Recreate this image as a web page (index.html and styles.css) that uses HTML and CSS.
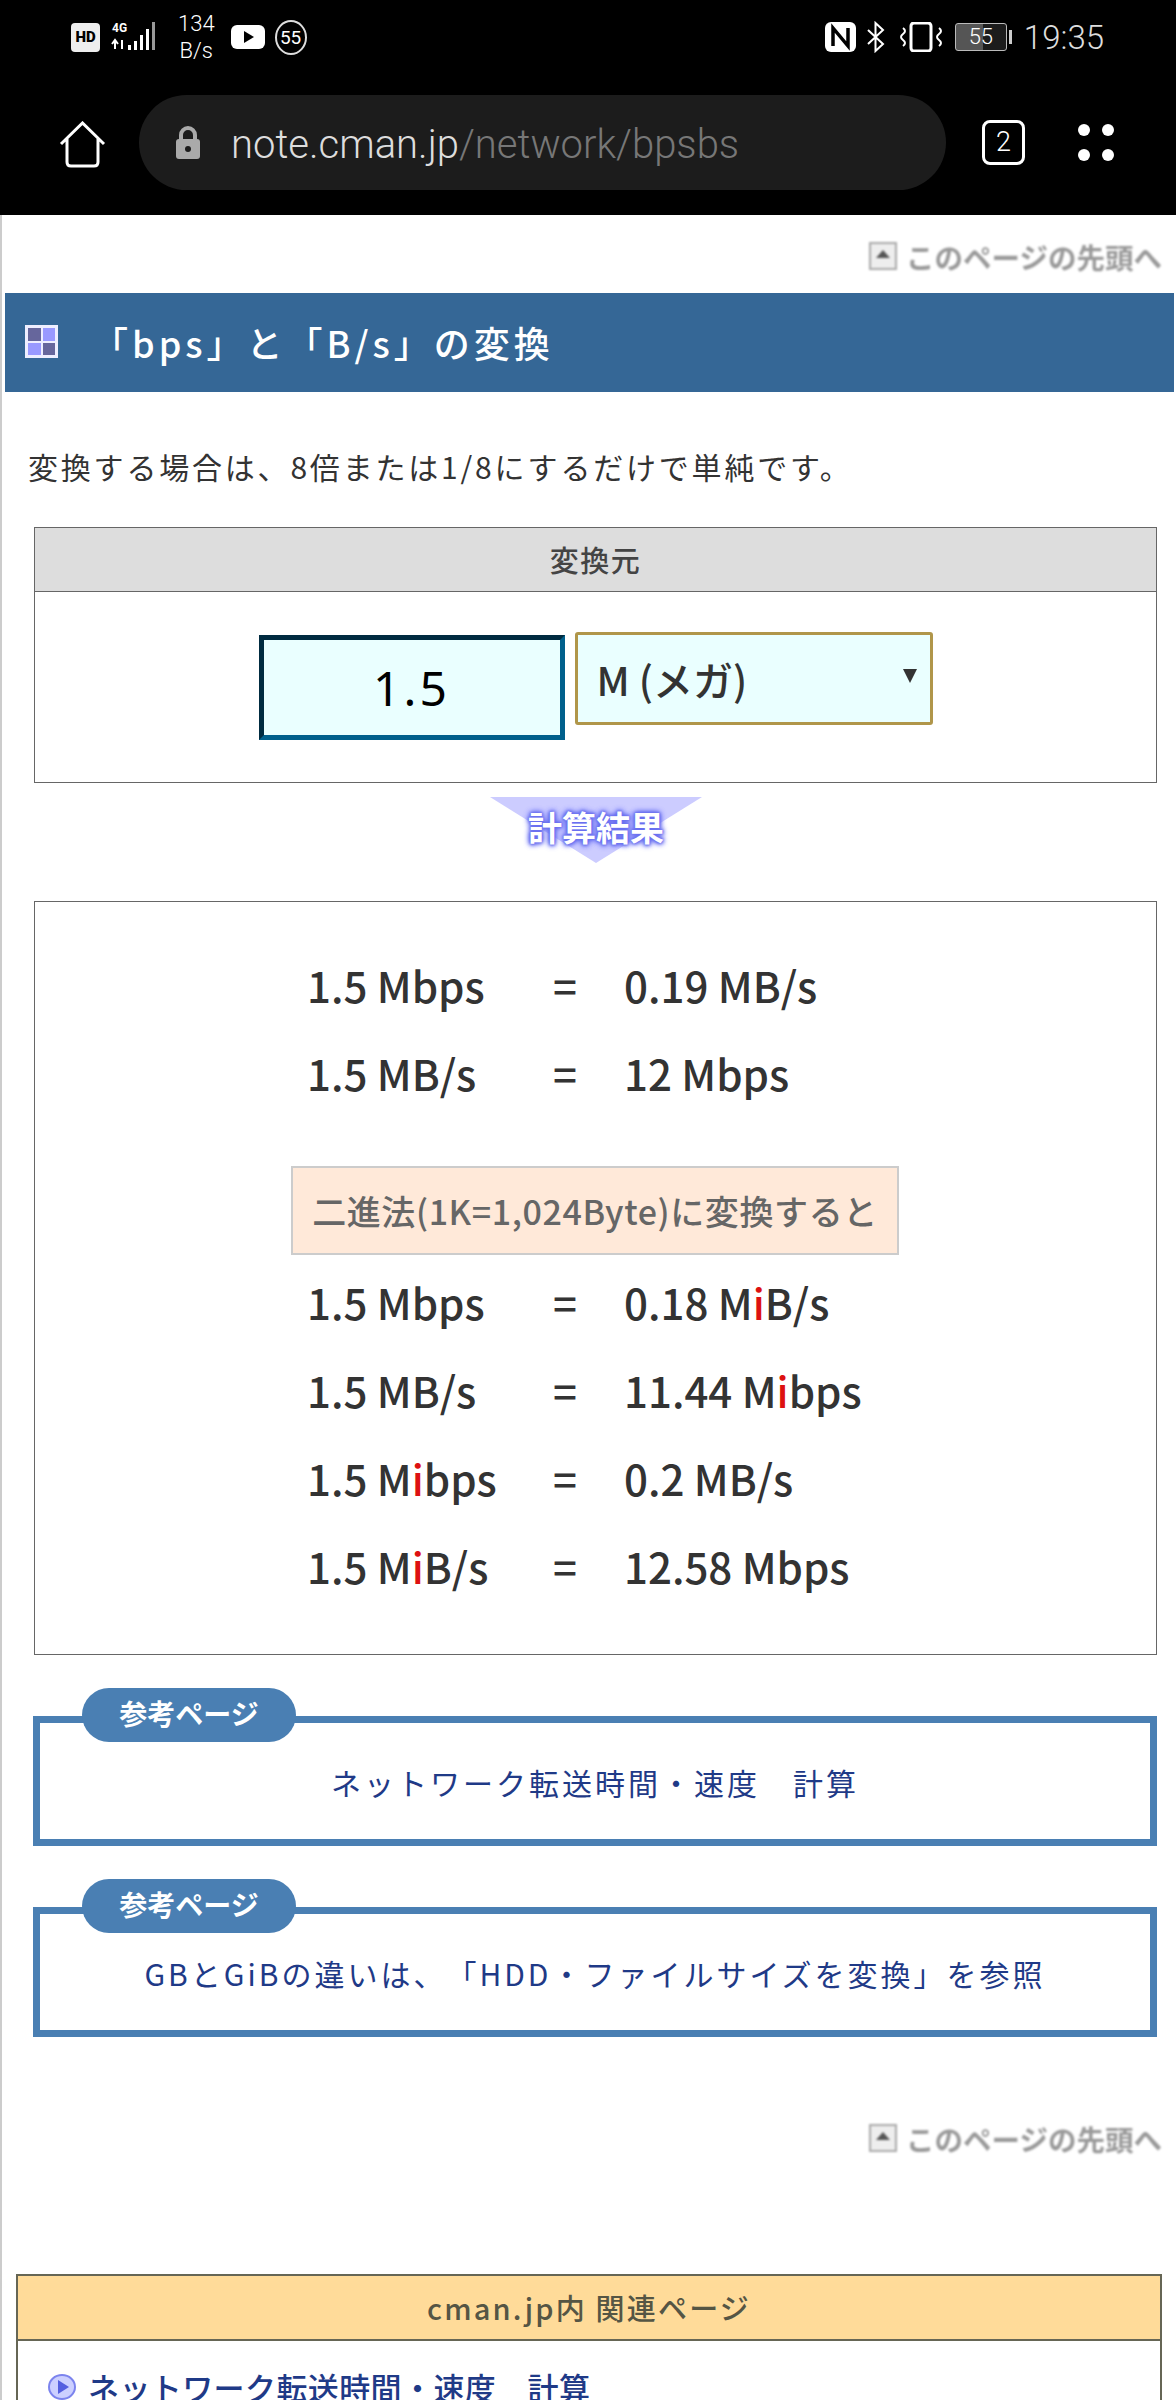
FILE: index.html
```html
<!DOCTYPE html>
<html lang="ja">
    <head>
        <meta charset="UTF-8" />
        <title>bpsとB/sの変換</title>
        <link rel="stylesheet" href="styles.css">
    </head>
    <body>
        <div class="phone-top">
            <div class="status-bar">
                <div class="status-left">
                    <span class="hd">HD</span>
                    <svg class="signal" width="50" height="32" viewBox="0 0 50 32">
                        <text x="1" y="11" class="sig-text">4G</text>
                        <path d="M4 19v9M1 23l3-4 3 4M11 19v9" stroke="#fff" stroke-width="2" fill="none"/>
                        <rect x="17" y="24" width="3" height="5" fill="#fff"/>
                        <rect x="23" y="20" width="3" height="9" fill="#fff"/>
                        <rect x="29" y="14" width="3" height="15" fill="#fff"/>
                        <rect x="35" y="8" width="3" height="21" fill="#fff"/>
                        <rect x="41" y="1" width="3" height="28" fill="#999"/>
                    </svg>
                    <span class="speed">134<br />B/s</span>
                    <svg class="play" width="34" height="24" viewBox="0 0 34 24">
                        <rect width="34" height="24" rx="6" fill="#fff"/>
                        <path d="M13 6l10 6-10 6z" fill="#000"/>
                    </svg>
                    <span class="count">55</span>
                </div>
                <div class="status-right">
                    <svg width="31" height="30" viewBox="0 0 31 30">
                        <rect x="0" y="0" width="31" height="30" rx="6" fill="#fff"/>
                        <path d="M8 24V6l15 18V6" stroke="#000" stroke-width="3.5" fill="none"/>
                    </svg>
                    <svg class="bt" width="19" height="32" viewBox="0 0 19 32">
                        <path d="M2 9l15 14-7.500 7V2L17 9 2 23" stroke="#fff" stroke-width="2" fill="none"/>
                    </svg>
                    <svg class="vibrate" width="43" height="30" viewBox="0 0 43 30">
                        <rect x="11" y="1" width="20" height="28" rx="3" stroke="#fff" stroke-width="3" fill="none"/>
                        <path d="M3 6q4 3 0 6t0 6 0 6M39 6q4 3 0 6t0 6 0 6" stroke="#fff" stroke-width="2" fill="none"/>
                    </svg>
                    <span class="battery"><span class="battery-num">55</span></span>
                    <span class="clock">19:35</span>
                </div>
            </div>
            <div class="url-row">
                <svg class="home" width="49" height="47" viewBox="0 0 49 47">
                    <path d="M3 23L24.500 2 46 23M9 18v23q0 4 4 4h23q4 0 4-4V18" stroke="#fff" stroke-width="3" fill="none"/>
                </svg>
                <div class="url-bar">
                    <svg width="28" height="33" viewBox="0 0 28 33">
                        <rect x="2" y="13" width="24" height="20" rx="3" fill="#aaa"/>
                        <path d="M7 14V9a7 7 0 0 1 14 0v5" stroke="#aaa" stroke-width="4" fill="none"/>
                        <circle cx="14" cy="23" r="3" fill="#1c1c1c"/>
                    </svg>
                    <span class="url"><span class="host">note.cman.jp</span>/network/bpsbs</span>
                </div>
                <span class="tab-count">2</span>
                <div class="menu-dots"><i></i><i></i><i></i><i></i></div>
            </div>
        </div>

        <div class="page">
            <div class="to-top to-top-first"><span class="top-icon"></span>このページの先頭へ</div>

            <h2 class="title-bar">
                <span class="title-icon"><i></i><i class="light"></i><i class="light"></i><i></i></span>
                <span>「bps」と「B/s」の変換</span>
            </h2>

            <p class="lead">変換する場合は、8倍または1/8にするだけで単純です。</p>

            <div class="box source-box">
                <div class="box-head">変換元</div>
                <div class="source-form">
                    <input class="num-input" type="text" value="1.5" />
                    <div class="unit-select">M (メガ)<span class="arrow"></span></div>
                </div>
            </div>

            <div class="result-mark"><span>計算結果</span></div>

            <div class="box result-box">
                <div class="calc"><span>1.5 Mbps</span><span>=</span><span>0.19 MB/s</span></div>
                <div class="calc"><span>1.5 MB/s</span><span>=</span><span>12 Mbps</span></div>
                <div class="binary-note">二進法(1K=1,024Byte)に変換すると</div>
                <div class="calc"><span>1.5 Mbps</span><span>=</span><span>0.18 M<b>i</b>B/s</span></div>
                <div class="calc"><span>1.5 MB/s</span><span>=</span><span>11.44 M<b>i</b>bps</span></div>
                <div class="calc"><span>1.5 M<b>i</b>bps</span><span>=</span><span>0.2 MB/s</span></div>
                <div class="calc"><span>1.5 M<b>i</b>B/s</span><span>=</span><span>12.58 Mbps</span></div>
            </div>

            <div class="ref-box">
                <span class="ref-badge">参考ページ</span>
                <a class="ref-link">ネットワーク転送時間・速度　計算</a>
            </div>
            <div class="ref-box">
                <span class="ref-badge">参考ページ</span>
                <a class="ref-link">GBとGiBの違いは、「HDD・ファイルサイズを変換」を参照</a>
            </div>

            <div class="to-top to-top-second"><span class="top-icon"></span>このページの先頭へ</div>

            <div class="related">
                <div class="related-head">cman.jp内 関連ページ</div>
                <div class="related-item">
                    <svg width="28" height="26" viewBox="0 0 28 26">
                        <ellipse cx="14" cy="13" rx="13" ry="12" fill="#ccd0ff" stroke="#7c84ee" stroke-width="2"/>
                        <path d="M10 6l11 7-11 7z" fill="#5560e0"/>
                    </svg>
                    <a>ネットワーク転送時間・速度　計算</a>
                </div>
            </div>
        </div>
    </body>
</html>
```

FILE: styles.css
```css
html,
body {
    margin: 0;
    height: 2400px;
    overflow: hidden;
}
body {
    width: 1176px;
    background: #fff;
    color: #333;
    font-family: "Noto Sans CJK JP", "Noto Sans", sans-serif;
    text-spacing-trim: space-all;
}
a {
    color: #1f3a87;
}

/* phone chrome */
.phone-top {
    height: 215px;
    background: #000;
    color: #fff;
    font-family: Roboto, sans-serif;
}
.status-bar {
    height: 95px;
    display: flex;
    justify-content: space-between;
    padding: 0 72px 0 71px;
    box-sizing: border-box;
}
.status-left,
.status-right {
    display: flex;
    align-items: center;
    height: 74px;
}
.bt {
    margin-left: 10px;
}
.vibrate {
    margin-left: 15px;
}
.hd {
    width: 29px;
    height: 29px;
    background: #eee;
    color: #000;
    border-radius: 4px;
    font-size: 15px;
    font-weight: 900;
    line-height: 29px;
    text-align: center;
}
.signal {
    margin-left: 11px;
}
.sig-text {
    fill: #fff;
    font-size: 12px;
    font-weight: 700;
}
.speed {
    margin-left: 17px;
    font-size: 22px;
    font-weight: 300;
    line-height: 27px;
    text-align: center;
}
.play {
    margin-left: 16px;
}
.count {
    margin-left: 10px;
    width: 28px;
    height: 31px;
    border: 2px solid #ddd;
    border-radius: 50%;
    font-size: 19px;
    line-height: 31px;
    text-align: center;
}
.battery {
    position: relative;
    margin-left: 12px;
    width: 50px;
    height: 26px;
    border: 1px solid #bbb;
    border-radius: 3px;
    background: linear-gradient(90deg, #555 55%, #1c1c1c 55%);
    font-size: 22px;
    font-weight: 300;
    line-height: 26px;
    text-align: center;
}
.battery::after {
    content: "";
    position: absolute;
    right: -6px;
    top: 6px;
    width: 3px;
    height: 14px;
    background: #ccc;
}
.clock {
    margin-left: 17px;
    font-size: 33px;
    font-weight: 300;
    color: #ddd;
}
.url-row {
    display: flex;
    align-items: center;
    height: 95px;
}
.home {
    margin: 3px 0 0 58px;
    flex-shrink: 0;
}
.url-bar {
    margin-left: 32px;
    width: 807px;
    height: 95px;
    box-sizing: border-box;
    padding-left: 35px;
    border-radius: 48px;
    background: #1c1c1c;
    display: flex;
    align-items: center;
}
.url {
    margin: 3px 0 0 29px;
    font-size: 40px;
    font-weight: 300;
    color: #777;
}
.host {
    color: #ddd;
}
.tab-count {
    margin-left: 36px;
    width: 37px;
    height: 39px;
    border: 3px solid #fff;
    border-radius: 8px;
    font-size: 27px;
    font-weight: 300;
    line-height: 39px;
    text-align: center;
}
.menu-dots {
    margin-left: 53px;
    width: 36px;
    display: grid;
    grid-template-columns: 12px 12px;
    justify-content: space-between;
    row-gap: 13px;
}
.menu-dots i {
    height: 12px;
    border-radius: 50%;
    background: #fff;
}

/* page */
.page {
    height: 2185px;
    overflow: hidden;
    border-left: 2px solid #ccc;
    padding-right: 2px;
}
.to-top {
    display: flex;
    justify-content: flex-end;
    align-items: center;
    gap: 9px;
    height: 28px;
    padding-right: 12px;
    color: #999;
    font-size: 28.5px;
    font-weight: 700;
    filter: blur(0.8px);
}
.to-top-first {
    margin-top: 27px;
}
.top-icon {
    position: relative;
    width: 24px;
    height: 24px;
    border: 2px solid #aaa;
    background: #eee;
}
.top-icon::after {
    content: "";
    position: absolute;
    left: 5px;
    top: 6px;
    border: 7px solid transparent;
    border-top: 0;
    border-bottom: 8px solid #555;
}
.title-bar {
    margin: 23px 0 0 3px;
    height: 99px;
    box-sizing: border-box;
    padding: 0 0 2px 20px;
    display: flex;
    align-items: center;
    gap: 34px;
    background: #356796;
    color: #fff;
    font-size: 36px;
    font-weight: 500;
    letter-spacing: 4px;
}
.title-icon {
    width: 33px;
    height: 33px;
    box-sizing: border-box;
    padding: 3px;
    background: #eef;
    display: grid;
    grid-template-columns: 1fr 1fr;
    gap: 2px;
}
.title-icon i {
    background: #66669c;
}
.title-icon .light {
    background: #9999ff;
}
.lead {
    margin: 53px 0 0 26px;
    font-size: 30px;
    line-height: 42px;
    letter-spacing: 2.8px;
    color: #333;
}
.box {
    margin: 0 17px 0 32px;
    border: 1px solid #666;
    box-sizing: border-box;
}
.source-box {
    margin-top: 40px;
    height: 256px;
}
.box-head {
    height: 63px;
    border-bottom: 1px solid #666;
    background: #ddd;
    color: #444;
    font-size: 29px;
    font-weight: 500;
    letter-spacing: 1.5px;
    line-height: 63px;
    text-align: center;
}
.source-form {
    display: flex;
    justify-content: center;
    align-items: flex-start;
    gap: 10px;
    padding-top: 40px;
}
.num-input {
    width: 306px;
    height: 105px;
    box-sizing: border-box;
    margin-top: 3px;
    border: 5px solid #00608c;
    border-top-color: #002b40;
    border-left-color: #002b40;
    background: #eaffff;
    color: #000;
    font-family: "Noto Sans", sans-serif;
    font-size: 48px;
    letter-spacing: 3px;
    text-align: center;
}
.unit-select {
    position: relative;
    width: 358px;
    height: 93px;
    box-sizing: border-box;
    padding-left: 19px;
    border: 3px solid #b0964a;
    border-radius: 3px;
    background: #eaffff;
    color: #333;
    font-size: 40px;
    font-weight: 500;
    line-height: 88px;
}
.arrow {
    position: absolute;
    right: 13px;
    top: 34px;
    border: 7px solid transparent;
    border-bottom: 0;
    border-top: 14px solid #333;
}
.result-mark {
    position: relative;
    margin: 14px 0 0 488px;
    width: 212px;
    height: 66px;
    text-align: center;
}
.result-mark::before {
    content: "";
    position: absolute;
    left: 0;
    top: 0;
    width: 212px;
    height: 66px;
    background: #ccccff;
    clip-path: polygon(0 0, 100% 0, 50% 100%);
}
.result-mark span {
    position: relative;
    color: #fff;
    font-size: 34px;
    font-weight: 700;
    line-height: 60px;
    text-shadow: 0 0 2px #6a70f0, 0 0 3px #6a70f0, 0 0 4px #6a70f0, 0 0 5px #6a70f0, 0 0 6px #6a70f0, 0 0 7px #8088f4;
}
.result-box {
    margin-top: 38px;
    height: 754px;
    padding-top: 39px;
}
.calc {
    display: grid;
    grid-template-columns: 246px 71px auto;
    height: 88px;
    margin-left: 272px;
    font-size: 42px;
    font-weight: 500;
    line-height: 88px;
    color: #333;
}
.calc b {
    color: #d11;
    font-weight: 500;
}
.binary-note {
    width: 608px;
    height: 89px;
    box-sizing: border-box;
    margin: 49px 0 3px 256px;
    border: 2px solid #ccc;
    background: #ffe9d9;
    color: #666;
    font-size: 34px;
    font-weight: 500;
    letter-spacing: 0.6px;
    line-height: 85px;
    text-align: center;
}
.ref-box {
    position: relative;
    margin: 61px 17px 0 31px;
    height: 130px;
    box-sizing: border-box;
    border: 7px solid #4a7fb3;
    text-align: center;
    font-size: 30px;
    letter-spacing: 3px;
    line-height: 118px;
}
.ref-badge {
    position: absolute;
    left: 42px;
    top: -35px;
    width: 214px;
    height: 54px;
    border-radius: 27px;
    background: #4a7fb3;
    color: #fff;
    font-size: 28px;
    font-weight: 700;
    letter-spacing: 0;
    line-height: 50px;
}
.to-top-second {
    margin-top: 87px;
}
.related {
    margin: 122px 12px 0 14px;
    border: 2px solid #666655;
    height: 200px;
}
.related-head {
    height: 63px;
    border-bottom: 2px solid #666655;
    background: #ffdb99;
    color: #554;
    font-size: 29px;
    font-weight: 500;
    letter-spacing: 2.2px;
    line-height: 63px;
    text-align: center;
}
.related-item {
    display: flex;
    align-items: center;
    gap: 12px;
    padding: 26px 0 0 30px;
    font-size: 31px;
    font-weight: 500;
    letter-spacing: 0.4px;
    line-height: 40px;
}
```
